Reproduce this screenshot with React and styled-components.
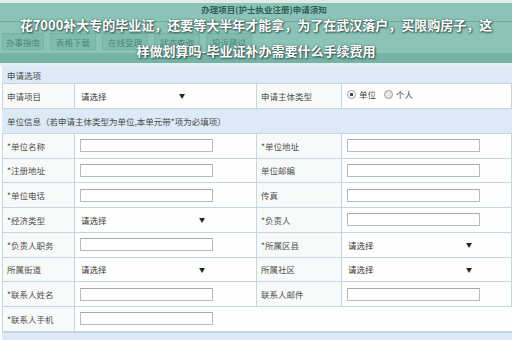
import React from "react";
import styled, { createGlobalStyle } from "styled-components";

const GlobalStyle = createGlobalStyle`
  html, body {
    margin: 0;
    padding: 0;
    background: #ffffff;
  }
  body {
    font-family: "Noto Sans CJK SC", "Noto Sans", sans-serif;
  }
`;

const Page = styled.div`
  width: 512px;
  height: 340px;
  overflow: hidden;
  position: relative;
  background: #fdfdfd;
`;

const TopBar = styled.div`
  position: relative;
  height: 66px;
  background: #8bc3b7;
  border-top: 3px solid #e3ebe9;
  box-sizing: border-box;
  display: flex;
  flex-direction: column;
`;

const TitleLine = styled.div`
  height: 19px;
  border-bottom: 1px solid #6fa99e;
  display: flex;
  justify-content: center;
  align-items: flex-start;
  padding: 1px 0 0 16px;
  box-sizing: border-box;
  font-size: 8.5px;
  line-height: 11px;
  font-weight: 700;
  color: #2f5f57;
`;

const TabRow = styled.div`
  display: flex;
  gap: 6px;
  padding: 11px 2px 0;
  height: 15px;
`;

const Tab = styled.div`
  width: ${(p) => p.w}px;
  height: 15px;
  background: #80bbaf;
  border: 1px solid #78b2a6;
  color: #4d867c;
  font-size: 8.5px;
  display: flex;
  align-items: center;
  justify-content: center;
`;

const LowStrip = styled.div`
  margin-top: auto;
  height: 10px;
  background: #76b3a7;
  border-bottom: 3px solid #e6eeee;
`;

const Headline = styled.div`
  position: absolute;
  left: 0;
  right: 0;
  top: 15px;
  display: flex;
  flex-direction: column;
  align-items: center;
  gap: 12px;
  color: #ffffff;
  font-size: 13px;
  font-weight: 700;
  line-height: 14px;
  text-shadow: 1px 1px 2px #2c4a45, 0 0 2px #3e6660;
`;

const Form = styled.div`
  padding-left: 2px;
`;

const SectionHead = styled.div`
  height: ${(p) => p.h}px;
  background: #dce9f7;
  border-bottom: 1px solid #c7d5e0;
  box-sizing: border-box;
  display: flex;
  align-items: ${(p) => (p.top ? "flex-start" : "center")};
  padding: ${(p) => (p.top ? "3px 5px 0" : "0 5px")};
  font-size: 8.5px;
  color: #4a4a4a;
`;

const Grid = styled.div`
  display: grid;
  grid-template-columns: 72px 182px 85px 1fr;
  grid-auto-rows: 24.75px;
  border-left: 1px solid #c7d5e0;
`;

const Cell = styled.div`
  border-right: 1px solid #c7d5e0;
  border-bottom: 1px solid #c7d5e0;
  box-sizing: border-box;
  display: flex;
  align-items: center;
  padding-left: ${(p) => (p.label ? 4 : 5)}px;
  background: ${(p) => (p.label ? "#f8f9f9" : "#fefefe")};
  font-size: 8.5px;
  color: #505050;
`;

const Blank = styled.div`
  grid-column: 2 / 5;
  border-bottom: 1px solid #c7d5e0;
  display: flex;
  align-items: center;
  padding-left: 5px;
  background: #fefefe;
`;

const Input = styled.div`
  width: 133px;
  height: 13px;
  border: 1px solid #b9bcbf;
  border-top-color: #a8abae;
  background: #ffffff;
  box-sizing: border-box;
`;

const Select = styled.div`
  width: ${(p) => p.w || 125}px;
  display: flex;
  justify-content: space-between;
  align-items: center;
  font-size: 8.5px;
  color: #333;
  padding-left: 1px;
`;

const Arrow = styled.span`
  font-size: 6px;
  color: #222;
`;

const Radio = styled.span`
  display: inline-block;
  width: 7px;
  height: 7px;
  border-radius: 50%;
  border: 1px solid #9a9a9a;
  background: ${(p) => (p.on ? "radial-gradient(circle, #444 0 1.6px, #fff 2px)" : "#e8e8e8")};
  margin: 0 3px 0 0;
`;

const RadioGroup = styled.div`
  display: flex;
  align-items: center;
  font-size: 8.5px;
  color: #444;
  padding-bottom: 3px;
`;

const Gap = styled.span`
  width: 8px;
`;

const Bottom = styled.div`
  height: 10px;
  background: #dce9f7;
  border-top: 1px solid #c7d5e0;
`;

const Field = ({ kind, w }) =>
  kind === "select" ? (
    <Select w={w}>
      请选择<Arrow>▼</Arrow>
    </Select>
  ) : (
    <Input />
  );

const rows = [
  ["*单位名称", "input", "*单位地址", "input"],
  ["*注册地址", "input", "单位邮编", "input"],
  ["*单位电话", "input", "传真", "input"],
  ["*经济类型", "select", "*负责人", "input"],
  ["*负责人职务", "input", "*所属区县", "select"],
  ["所属街道", "select", "所属社区", "select"],
  ["*联系人姓名", "input", "联系人邮件", "input"],
];

export default function App() {
  return (
    <Page>
      <GlobalStyle />
      <TopBar>
        <TitleLine>办理项目(护士执业注册)申请须知</TitleLine>
        <TabRow>
          <Tab w={40}>办事指南</Tab>
          <Tab w={44}>表格下载</Tab>
          <Tab w={44}>在线受理</Tab>
          <Tab w={44}>状态查询</Tab>
          <Tab w={44}>投诉建议</Tab>
        </TabRow>
        <LowStrip />
        <Headline>
          <span>花7000补大专的毕业证，还要等大半年才能拿，为了在武汉落户，买限购房子，这</span>
          <span>样做划算吗-毕业证补办需要什么手续费用</span>
        </Headline>
      </TopBar>
      <Form>
        <SectionHead h={18} top>申请选项</SectionHead>
        <Grid>
          <Cell label>申请项目</Cell>
          <Cell>
            <Field kind="select" w={104} />
          </Cell>
          <Cell label>申请主体类型</Cell>
          <Cell>
            <RadioGroup>
              <Radio on />
              单位
              <Gap />
              <Radio />
              个人
            </RadioGroup>
          </Cell>
        </Grid>
        <SectionHead h={25}>单位信息（若申请主体类型为单位,本单元带*项为必填项）</SectionHead>
        <Grid>
          {rows.map(([l1, k1, l2, k2]) => (
            <React.Fragment key={l1}>
              <Cell label>{l1}</Cell>
              <Cell>
                <Field kind={k1} w={124} />
              </Cell>
              <Cell label>{l2}</Cell>
              <Cell>
                <Field kind={k2} w={124} />
              </Cell>
            </React.Fragment>
          ))}
          <Cell label>*联系人手机</Cell>
          <Blank>
            <Input />
          </Blank>
        </Grid>
        <Bottom />
      </Form>
    </Page>
  );
}
